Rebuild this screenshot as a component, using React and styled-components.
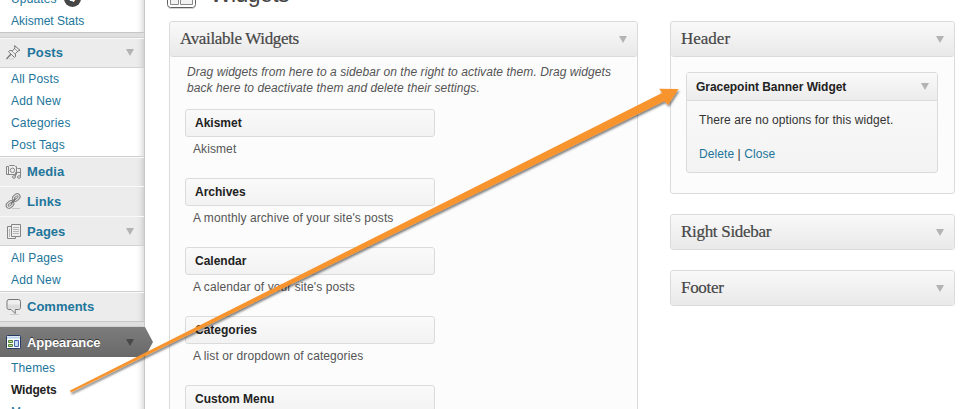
import React from 'react';
import styled, { createGlobalStyle, css } from 'styled-components';

const Global = createGlobalStyle`
  * { box-sizing: border-box; }
  body { margin: 0; background: #fff; overflow: hidden; }
`;

const Screen = styled.div`
  position: relative;
  display: flex;
  width: 961px;
  height: 409px;
  overflow: hidden;
  background: #fff;
  font-family: 'Liberation Sans', Arial, sans-serif;
  font-size: 12px;
  color: #333;
`;

/* ---------- admin menu ---------- */

const Sidebar = styled.nav`
  flex: none;
  width: 145px;
  height: 421px;
  margin-top: -12px;
  border-right: 1px solid #c9c9c9;
  background: linear-gradient(to right, #fff 136px, #f6f6f6 140px, #dfdfdf 144px);
`;

const Submenu = styled.ul`
  list-style: none;
  margin: 0;
  padding: ${(p) => (p.$inset ? '1px' : '0')} 0 0 11px;
`;

const SubItem = styled.li`
  display: flex;
  align-items: center;
  height: 22px;
  white-space: nowrap;
  color: ${(p) => (p.$current ? '#222' : '#21759b')};
  font-weight: ${(p) => (p.$current ? 'bold' : 'normal')};
  letter-spacing: ${(p) => p.$spacing || '0.15px'};
`;

const Badge = styled.span`
  width: 17px;
  height: 17px;
  margin: -1px 0 0 7px;
  border-radius: 50%;
  background: #464646;
  color: #fff;
  font-size: 9px;
  font-weight: bold;
  line-height: 18px;
  text-align: center;
`;

const Separator = styled.div`
  height: 6px;
  border-top: 1px solid #c6c6c6;
  border-bottom: 1px solid #d0d0d0;
  background: #dfdfdf;
`;

const MenuHead = styled.div`
  position: relative;
  display: flex;
  align-items: center;
  height: 30px;
  padding: 0 10px ${(p) => (p.$raised ? '2px' : '0')} 5px;
  border-top: 1px solid ${(p) => (p.$line ? '#cfcfcf' : '#f9f9f9')};
  border-bottom: ${(p) => (p.$open ? '1px solid #d3d3d3' : '0')};
  background: linear-gradient(to right, #ececec 136px, #e6e6e6 140px, #d2d2d2 144px);
  box-shadow: ${(p) => (p.$line ? 'inset 0 1px 0 #f9f9f9' : 'none')};
  color: #21759b;
  ${(p) =>
    p.$current &&
    css`
      border: 0;
      background: linear-gradient(#7c7c7c, #696969);
      color: #fff;
      text-shadow: 0 -1px 0 #333;
    `}
`;

const HeadIcon = styled.span`
  display: flex;
  width: 22px;
  svg { display: block; }
`;

const HeadLabel = styled.span`
  flex: 1;
  font-size: 13px;
  font-weight: bold;
  letter-spacing: ${(p) => p.$spacing || '0'};
`;

const Caret = styled.i`
  flex: none;
  width: 0;
  height: 0;
  border: solid transparent;
  border-width: 7px 4px 0;
  border-top-color: ${(p) => (p.$dark ? '#484848' : '#b3b3b3')};
`;

const CurrentArrow = styled.svg`
  position: absolute;
  left: 144px;
  top: 0;
  z-index: 1;
`;

/* ---------- content ---------- */

const Content = styled.main`
  flex: 1;
  display: flex;
  flex-direction: column;
  padding-left: 24px;
`;

const PageTitle = styled.header`
  display: flex;
  flex: none;
  height: 21px;
  margin-left: -3px;
  overflow: hidden;
`;

const TitleIcon = styled.svg`
  flex: none;
`;

const TitleText = styled.h1`
  margin: -23px 0 0 12px;
  font-size: 23px;
  font-weight: normal;
  line-height: 34px;
  letter-spacing: -0.6px;
  color: #464646;
`;

const Columns = styled.div`
  display: flex;
  align-items: flex-start;
  gap: 32px;
`;

const RightColumn = styled.div`
  display: flex;
  flex-direction: column;
  gap: 20px;
  width: 285px;
`;

const Panel = styled.section`
  width: ${(p) => p.$width};
  height: ${(p) => p.$height};
  border: 1px solid #dadcdc;
  border-radius: 3px;
  background: #fcfcfc;
`;

const PanelHead = styled.header`
  display: flex;
  align-items: center;
  justify-content: space-between;
  height: ${(p) => (p.$closed ? '34px' : '35px')};
  padding: 0 10px;
  border-bottom: ${(p) => (p.$closed ? '0' : '1px solid #dadcdc')};
  border-radius: 3px;
  background: linear-gradient(#f9f9f9, #e9e9e9);
`;

const PanelTitle = styled.h2`
  margin: 0;
  font-family: 'Liberation Serif', Georgia, serif;
  font-size: 17px;
  font-weight: normal;
  line-height: 20px;
  letter-spacing: ${(p) => p.$spacing || '-0.3px'};
  -webkit-text-stroke: 0.2px #464646;
  color: #464646;
`;

const Hint = styled.p`
  margin: 7px 0 13px 17px;
  font-style: italic;
  line-height: 16px;
  white-space: nowrap;
  color: #555;
`;

const HintLine = styled.span`
  display: block;
  letter-spacing: ${(p) => p.$spacing};
`;

const WidgetList = styled.div`
  display: flex;
  flex-direction: column;
  padding-left: 15px;
`;

const WidgetEntry = styled.article`
  height: 69px;
`;

const WidgetCard = styled.div`
  display: flex;
  align-items: center;
  width: 250px;
  height: 28px;
  padding-left: 9px;
  border: 1px solid #dadcdc;
  border-radius: 3px;
  background: linear-gradient(#fafafa, #f2f2f2);
  font-weight: bold;
  color: #222;
`;

const WidgetInfo = styled.p`
  margin: 4px 0 0 8px;
  line-height: 16px;
  letter-spacing: 0.09px;
  color: #555;
`;

const OpenWidget = styled.article`
  width: 252px;
  height: 101px;
  margin: 15px 0 0 15px;
  border: 1px solid #dadcdc;
  border-radius: 3px;
  background: linear-gradient(#f8f8f8 30px, #f3f3f3);
`;

const OpenWidgetHead = styled.header`
  display: flex;
  align-items: center;
  justify-content: space-between;
  height: 28px;
  padding: 0 8px 0 9px;
  border-bottom: 1px solid #dadcdc;
  background: linear-gradient(#f9f9f9, #ececec);
  font-weight: bold;
  letter-spacing: -0.04px;
  color: #222;
`;

const OpenWidgetBody = styled.div`
  display: flex;
  flex-direction: column;
  gap: 18px;
  padding: 11px 12px;
  line-height: 16px;
  letter-spacing: 0.08px;
  color: #333;
`;

const Link = styled.a`
  color: #21759b;
`;

const Pointer = styled.svg`
  position: absolute;
  inset: 0;
  z-index: 2;
  pointer-events: none;
`;

/* ---------- icons ---------- */

const PinIcon = () => (
  <svg width="17" height="17" viewBox="0 0 17 17" fill="none" stroke="#777" strokeLinejoin="round">
    <path d="M1.500 15 6 10" strokeWidth="1.3" />
    <path d="M9.500 1.500 15 6.300l-2 .7-2.700 2.700.3 2.800-1.300.8-5.800-5.600 1.200-1.200 2.700.3L10 4z" fill="#eee" />
    <path d="m9.500 4.500 3 2.700M7 7l3 3" strokeWidth=".7" />
    <path d="M4 15h5" stroke="#ccc" />
  </svg>
);

const MediaIcon = () => (
  <svg width="17" height="17" viewBox="0 0 17 17" fill="none" stroke="#858585">
    <path d="M1.500 3.500h2l1-1h5l1 1h1v8h-10z" fill="#eee" />
    <circle cx="7.500" cy="7.300" r="2.200" />
    <path d="M3.500 4v7M12.500 5.500h3v8M10.500 13.500v-4h5" />
    <ellipse cx="9" cy="14" rx="1.500" ry="1.300" fill="#eee" />
    <ellipse cx="14" cy="14" rx="1.500" ry="1.300" fill="#eee" />
  </svg>
);

const LinkIcon = () => (
  <svg width="17" height="17" viewBox="0 0 17 17" fill="none">
    <g stroke="#808080" strokeWidth="3">
      <rect x="8" y="2.600" width="6.400" height="3.800" rx="1.900" transform="rotate(-42 11.2 4.5)" />
      <rect x="1.800" y="9.600" width="6.400" height="3.800" rx="1.900" transform="rotate(-42 5 11.5)" />
    </g>
    <g stroke="#e6e6e6" strokeWidth="1.100">
      <rect x="8" y="2.600" width="6.400" height="3.800" rx="1.900" transform="rotate(-42 11.2 4.5)" />
      <rect x="1.800" y="9.600" width="6.400" height="3.800" rx="1.900" transform="rotate(-42 5 11.5)" />
    </g>
    <path d="m6 10.500 4.500-4.800" stroke="#777" strokeWidth="1.800" />
    <path d="M7 15.500h8" stroke="#c6c6c6" />
  </svg>
);

const PagesIcon = () => (
  <svg width="17" height="17" viewBox="0 0 17 17" fill="#eee" stroke="#858585">
    <path d="M2.500 3.500h8v12h-8z" />
    <path d="M6.500 1.500h9v12h-9z" />
    <path d="M8 4.500h6M8 6.500h6M8 8.500h6M8 10.500h6M4.500 6v8" stroke="#b5b5b5" />
  </svg>
);

const CommentIcon = () => (
  <svg width="17" height="17" viewBox="0 0 17 17">
    <path
      d="M4 1.500h9.500q2 0 2 2v6q0 2-2 2h-3.300v4l-4-4H4q-2 0-2-2v-6q0-2 2-2z"
      fill="#eee"
      stroke="#777"
    />
    <path d="M3 6.500h12v3q0 1.500-1.500 1.500h-9Q3 11 3 9.500z" fill="#dcdcdc" />
    <path d="M5 16.500h9" stroke="#ccc" />
  </svg>
);

const AppearanceIcon = () => (
  <svg width="17" height="17" viewBox="0 0 17 17">
    <rect x="1.500" y="1.500" width="14" height="13" rx=".8" fill="#fff" stroke="#283b62" />
    <path d="M2 3.500h13" stroke="#b9cfec" strokeWidth="2" />
    <path d="M3.500 6.500h4v2h-4zM3.500 10.500h4v2h-4z" fill="#b9df97" stroke="#54823c" />
    <path d="M9.500 6.500h4v6h-4z" fill="#cbdcf5" stroke="#3f64b2" />
  </svg>
);

const MENU = [
  {
    label: 'Posts',
    icon: PinIcon,
    raised: true,
    spacing: '0.15px',
    items: ['All Posts', 'Add New', 'Categories', 'Post Tags'],
  },
  { label: 'Media', icon: MediaIcon, line: true, spacing: '0.1px' },
  { label: 'Links', icon: LinkIcon, spacing: '0.1px' },
  { label: 'Pages', icon: PagesIcon, inset: true, items: ['All Pages', 'Add New'] },
  { label: 'Comments', icon: CommentIcon, line: true },
];

const WIDGETS = [
  ['Akismet', 'Akismet'],
  ['Archives', "A monthly archive of your site's posts"],
  ['Calendar', "A calendar of your site's posts"],
  ['Categories', 'A list or dropdown of categories'],
  ['Custom Menu', ''],
];

function MenuSection({ label, icon: Icon, items, line, spacing, raised, inset }) {
  return (
    <>
      <MenuHead $open={Boolean(items)} $line={line} $raised={raised}>
        <HeadIcon><Icon /></HeadIcon>
        <HeadLabel $spacing={spacing}>{label}</HeadLabel>
        {items && <Caret />}
      </MenuHead>
      {items && (
        <Submenu $inset={inset}>
          {items.map((item) => <SubItem key={item}>{item}</SubItem>)}
        </Submenu>
      )}
    </>
  );
}

export default function App() {
  return (
    <Screen>
      <Global />
      <Sidebar>
        <Submenu>
          <SubItem>Updates<Badge>4</Badge></SubItem>
          <SubItem $spacing="0px">Akismet Stats</SubItem>
        </Submenu>
        <Separator />
        {MENU.map((section) => <MenuSection key={section.label} {...section} />)}
        <Separator />
        <MenuHead $current>
          <HeadIcon><AppearanceIcon /></HeadIcon>
          <HeadLabel $spacing="-0.1px">Appearance</HeadLabel>
          <Caret $dark />
          <CurrentArrow width="9" height="30" viewBox="0 0 9 30">
            <defs>
              <linearGradient id="tab" x2="0" y2="1">
                <stop stopColor="#7c7c7c" />
                <stop offset="1" stopColor="#696969" />
              </linearGradient>
            </defs>
            <path d="M0 0h1l8 15-8 15H0z" fill="url(#tab)" />
          </CurrentArrow>
        </MenuHead>
        <Submenu>
          <SubItem>Themes</SubItem>
          <SubItem $current $spacing="-0.15px">Widgets</SubItem>
          <SubItem>Menus</SubItem>
        </Submenu>
      </Sidebar>

      <Content>
        <PageTitle>
          <TitleIcon width="32" height="10" viewBox="0 0 32 10">
            <path d="M1.500-8h28V4.500q0 3-3 3h-22q-3 0-3-3z" fill="#fff" stroke="#5f5f5f" />
            <path d="M3 8.500h25" stroke="#d5d5d5" />
            <path d="M4.500-2h8v6.500h-8zM14.500-2h12v6.500h-12z" fill="#f2f2f2" stroke="#8a8a8a" />
          </TitleIcon>
          <TitleText>Widgets</TitleText>
        </PageTitle>
        <Columns>
          <Panel $width="469px" $height="420px">
            <PanelHead>
              <PanelTitle $spacing="-0.35px">Available Widgets</PanelTitle>
              <Caret />
            </PanelHead>
            <Hint>
              <HintLine $spacing="0.065px">
                Drag widgets from here to a sidebar on the right to activate them. Drag widgets
              </HintLine>
              <HintLine $spacing="0.085px">
                back here to deactivate them and delete their settings.
              </HintLine>
            </Hint>
            <WidgetList>
              {WIDGETS.map(([name, info]) => (
                <WidgetEntry key={name}>
                  <WidgetCard>{name}</WidgetCard>
                  <WidgetInfo>{info}</WidgetInfo>
                </WidgetEntry>
              ))}
            </WidgetList>
          </Panel>
          <RightColumn>
            <Panel $height="173px">
              <PanelHead>
                <PanelTitle $spacing="0px">Header</PanelTitle>
                <Caret />
              </PanelHead>
              <OpenWidget>
                <OpenWidgetHead>
                  Gracepoint Banner Widget
                  <Caret />
                </OpenWidgetHead>
                <OpenWidgetBody>
                  <span>There are no options for this widget.</span>
                  <span><Link>Delete</Link> | <Link>Close</Link></span>
                </OpenWidgetBody>
              </OpenWidget>
            </Panel>
            <Panel $height="36px">
              <PanelHead $closed>
                <PanelTitle>Right Sidebar</PanelTitle>
                <Caret />
              </PanelHead>
            </Panel>
            <Panel $height="36px">
              <PanelHead $closed>
                <PanelTitle>Footer</PanelTitle>
                <Caret />
              </PanelHead>
            </Panel>
          </RightColumn>
        </Columns>
      </Content>

      <Pointer width="961" height="409" viewBox="0 0 961 409">
        <defs>
          <filter id="shade" x="-5%" y="-5%" width="110%" height="110%">
            <feDropShadow dx="1" dy="2" stdDeviation="1.3" floodColor="#000" floodOpacity=".5" />
          </filter>
        </defs>
        <path
          d="M70 390.500 662 93 659.300 88.700 678.500 89 668 105 664.500 101 71 392.500z"
          fill="#f8942f"
          filter="url(#shade)"
        />
      </Pointer>
    </Screen>
  );
}
